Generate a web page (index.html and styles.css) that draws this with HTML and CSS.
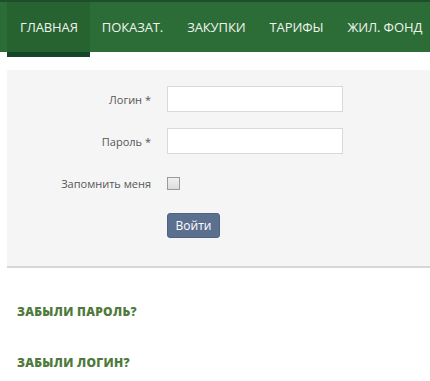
FILE: index.html
```html
<!DOCTYPE html>
<html lang="ru">
<head>
<meta charset="utf-8">
<title>Вход</title>
<link rel="stylesheet" href="styles.css">
</head>
<body>
<nav class="nav">
  <ul class="menu">
    <li class="item active">Главная</li>
    <li class="item">Показат.</li>
    <li class="item">Закупки</li>
    <li class="item">Тарифы</li>
    <li class="item">Жил. фонд</li>
  </ul>
</nav>
<main class="content">
  <form class="panel">
    <div class="row">
      <label class="label">Логин *</label>
      <input class="field" type="text">
    </div>
    <div class="row">
      <label class="label">Пароль *</label>
      <input class="field" type="password">
    </div>
    <div class="row">
      <label class="label">Запомнить меня</label>
      <span class="check"></span>
    </div>
    <div class="row">
      <span class="label"></span>
      <button class="btn" type="button">Войти</button>
    </div>
  </form>
  <ul class="links">
    <li><a class="link" href="#">Забыли пароль?</a></li>
    <li><a class="link" href="#">Забыли логин?</a></li>
  </ul>
</main>
</body>
</html>
```
FILE: styles.css
```css
html, body {
  margin: 0;
  padding: 0;
  background: #ffffff;
  font-family: "Open Sans", "Liberation Sans", sans-serif;
  overflow: hidden;
}
.nav {
  background: #2c6c36;
  border-top: 2px solid #1d4f2b;
  height: 50px;
  padding-left: 7px;
}
.menu {
  list-style: none;
  margin: 0;
  padding: 0;
  display: flex;
  height: 100%;
}
.item {
  color: #eef5ee;
  font-size: 13px;
  text-transform: uppercase;
  padding: 0 12px 0 12px;
  display: flex;
  align-items: center;
  height: 100%;
  white-space: nowrap;
  letter-spacing: -0.1px;
}
.item.active {
  background: #276331;
  padding: 0 12px 0 13px;
  height: 55px;
  box-sizing: border-box;
  border-bottom: 5px solid #164628;
  align-self: flex-start;
}
.content {
  padding: 18px 0 0 7px;
}
.panel {
  background: #f5f5f5;
  border-bottom: 2px solid #d6d6d6;
  padding: 16px 0 28px 0;
  display: flex;
  flex-direction: column;
  gap: 16px;
}
.row {
  display: flex;
  align-items: center;
  gap: 16px;
  height: 26px;
}
.label {
  width: 144px;
  text-align: right;
  font-size: 11px;
  color: #555;
}
.field {
  width: 176px;
  height: 26px;
  box-sizing: border-box;
  border: 1px solid #d9d9d9;
  background: #fff;
  margin: 0;
  padding: 0 6px;
}
.check {
  width: 11px;
  height: 11px;
  border: 1px solid #9a9a9a;
  background: linear-gradient(#f0f0f0, #dcdcdc);
  display: block;
}
.btn {
  background: #5b6f8e;
  color: #fff;
  border: 1px solid #4f6281;
  border-radius: 3px;
  font-family: "Open Sans", "Liberation Sans", sans-serif;
  font-size: 12px;
  width: 53px;
  height: 25px;
  padding: 0;
  margin: 0;
}
.links {
  list-style: none;
  margin: 0;
  padding: 34px 0 0 10px;
  display: flex;
  flex-direction: column;
  gap: 35px;
}
.links li { line-height: 16px; height: 16px; }
.link {
  color: #4e7a3b;
  font-weight: 800;
  font-size: 12px;
  text-transform: uppercase;
  text-decoration: none;
  letter-spacing: 0.3px;
}
```
